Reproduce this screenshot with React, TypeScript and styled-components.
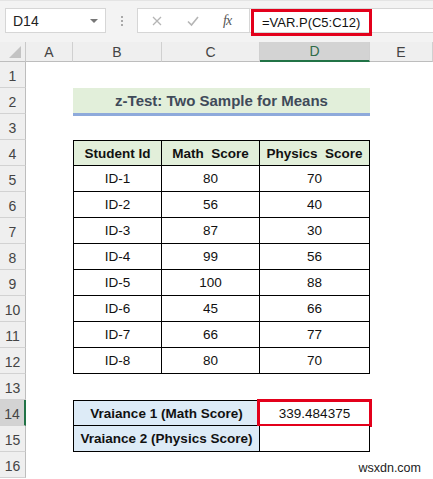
import React from 'react';
import styled, { createGlobalStyle, css } from 'styled-components';

const GlobalStyle = createGlobalStyle`
  body {
    margin: 0;
    background: #fff;
    font-family: "Liberation Sans", Arial, sans-serif;
    overflow: hidden;
  }
`;

const Window = styled.div`
  width: 433px;
  height: 479px;
  position: relative;
  overflow: hidden;
  background: #fff;
`;

// Formula bar
const Toolbar = styled.div`
  height: 42px;
  box-sizing: border-box;
  background: #f3f3f3;
  border-top: 1px solid #e4e4e4;
  display: flex;
  align-items: flex-start;
  padding: 7px 0 0 5px;
`;

const NameBox = styled.div`
  width: 101px;
  height: 25px;
  box-sizing: border-box;
  background: #fff;
  border: 1px solid #d6d6d6;
  display: flex;
  align-items: center;
  justify-content: space-between;
  padding: 0 7px 0 7px;
  font-size: 14px;
  color: #222;
`;

const DropArrow = styled.span`
  width: 0;
  height: 0;
  border-left: 4px solid transparent;
  border-right: 4px solid transparent;
  border-top: 4px solid #777;
`;

const Grip = styled.div`
  width: 31px;
  height: 25px;
  display: flex;
  flex-direction: column;
  align-items: center;
  justify-content: center;
  gap: 2px;
  span {
    width: 2px;
    height: 2px;
    background: #a9a9a9;
  }
`;

const FxBox = styled.div`
  width: 113px;
  height: 25px;
  box-sizing: border-box;
  background: #fff;
  border: 1px solid #d6d6d6;
  display: flex;
  align-items: center;
  gap: 24px;
  padding-left: 13px;
`;

const FxText = styled.span`
  width: 14px;
  font-family: "Liberation Serif", "Times New Roman", serif;
  font-style: italic;
  font-size: 14px;
  color: #555;
  letter-spacing: -1px;
`;

const FormulaArea = styled.div`
  flex: 1;
  height: 25px;
  box-sizing: border-box;
  background: #fff;
  border-top: 1px solid #d6d6d6;
  border-bottom: 1px solid #d6d6d6;
  display: flex;
`;

const RedBox = styled.div`
  width: 121px;
  height: 27px;
  box-sizing: border-box;
  margin: 0 0 0 1px;
  border: 3px solid #e3001b;
  display: flex;
  align-items: center;
  padding-left: 8px;
  font-size: 13px;
  color: #111;
`;

// Sheet
const Sheet = styled.div`
  display: grid;
  grid-template-columns: 26px 47px 89px 98px 110px 1fr;
  grid-template-rows: 20px repeat(16, 26px);
`;

const headBase = css`
  background: #efefef;
  color: #444;
  font-size: 14px;
  display: flex;
  align-items: center;
  justify-content: center;
  box-sizing: border-box;
`;

const Corner = styled.div`
  ${headBase};
  border-right: 1px solid #c9c9c9;
  border-bottom: 1px solid #bdbdbd;
  align-items: flex-end;
  justify-content: flex-end;
  padding: 0 4px 3px 0;
`;

const ColHead = styled.div<{ $active?: boolean }>`
  ${headBase};
  border-right: 1px solid #d0d0d0;
  border-bottom: 1px solid #bdbdbd;
  ${(p) =>
    p.$active &&
    css`
      background: #d3d3d3;
      color: #2f6b48;
      border-bottom: 2px solid #217346;
    `}
`;

const RowHead = styled.div<{ $active?: boolean }>`
  ${headBase};
  border-right: 1px solid #bdbdbd;
  border-bottom: 1px solid #d2d2d2;
  padding-top: 3px;
  ${(p) =>
    p.$active &&
    css`
      background: #d3d3d3;
      border-right: 2px solid #217346;
    `}
`;

const Empty = styled.div<{ $span?: number }>`
  grid-column: span ${(p) => p.$span || 1};
`;

const Title = styled.div`
  grid-column: span 3;
  height: 28px;
  box-sizing: border-box;
  background: #e2efda;
  border-bottom: 3px solid #8eaadb;
  display: flex;
  align-items: center;
  justify-content: center;
  font-weight: bold;
  font-size: 15px;
  color: #3f4a59;
`;

const Cell = styled.div<{ $span?: number; $bg?: string; $bold?: boolean; $top?: boolean; $left?: boolean }>`
  grid-column: span ${(p) => p.$span || 1};
  box-sizing: border-box;
  position: relative;
  background: ${(p) => p.$bg || '#fff'};
  border-right: 1px solid #000;
  border-bottom: 1px solid #000;
  border-top: ${(p) => (p.$top ? '1px solid #000' : 'none')};
  border-left: ${(p) => (p.$left ? '1px solid #000' : 'none')};
  display: flex;
  align-items: center;
  justify-content: center;
  font-size: 13.5px;
  font-weight: ${(p) => (p.$bold ? 'bold' : 'normal')};
  color: #111;
  white-space: pre;
`;

const Marked = styled(Cell)`
  &::after {
    content: '';
    position: absolute;
    left: -3px;
    top: -2px;
    right: -3px;
    bottom: -2px;
    border: 3px solid #e3001b;
  }
`;

const Watermark = styled.div`
  position: absolute;
  right: 12px;
  bottom: 4px;
  font-size: 12.5px;
  color: #222;
`;

const CornerMark = () => (
  <svg width="12" height="12" viewBox="0 0 12 12">
    <polygon points="12,0 12,12 0,12" fill="#c3c3c3" />
  </svg>
);

const Cross = () => (
  <svg width="12" height="12" viewBox="0 0 12 12">
    <path d="M2 2 L10 10 M10 2 L2 10" stroke="#b5b5b5" strokeWidth="1.3" fill="none" />
  </svg>
);

const Check = () => (
  <svg width="12" height="12" viewBox="0 0 12 12">
    <path d="M1 6.5 L4.5 10 L11 2" stroke="#b5b5b5" strokeWidth="1.6" fill="none" />
  </svg>
);

const scores = [
  ['ID-1', '80', '70'],
  ['ID-2', '56', '40'],
  ['ID-3', '87', '30'],
  ['ID-4', '99', '56'],
  ['ID-5', '100', '88'],
  ['ID-6', '45', '66'],
  ['ID-7', '66', '77'],
  ['ID-8', '80', '70'],
];

const greenHead = '#e2efda';
const blueHead = '#ddebf7';

const App = () => {
  return (
    <Window>
      <GlobalStyle />
      <Toolbar>
        <NameBox>
          D14
          <DropArrow />
        </NameBox>
        <Grip>
          <span />
          <span />
          <span />
        </Grip>
        <FxBox>
          <Cross />
          <Check />
          <FxText>fx</FxText>
        </FxBox>
        <FormulaArea>
          <RedBox>=VAR.P(C5:C12)</RedBox>
        </FormulaArea>
      </Toolbar>
      <Sheet>
        <Corner>
          <CornerMark />
        </Corner>
        <ColHead>A</ColHead>
        <ColHead>B</ColHead>
        <ColHead>C</ColHead>
        <ColHead $active>D</ColHead>
        <ColHead>E</ColHead>

        <RowHead>1</RowHead>
        <Empty $span={5} />

        <RowHead>2</RowHead>
        <Empty />
        <Title>z-Test: Two Sample for Means</Title>
        <Empty />

        <RowHead>3</RowHead>
        <Empty $span={5} />

        <RowHead>4</RowHead>
        <Empty />
        <Cell $bg={greenHead} $bold $top $left>Student Id</Cell>
        <Cell $bg={greenHead} $bold $top>{'Math  Score'}</Cell>
        <Cell $bg={greenHead} $bold $top>{'Physics  Score'}</Cell>
        <Empty />

        {scores.map((row, i) => (
          <React.Fragment key={row[0]}>
            <RowHead>{i + 5}</RowHead>
            <Empty />
            <Cell $left>{row[0]}</Cell>
            <Cell>{row[1]}</Cell>
            <Cell>{row[2]}</Cell>
            <Empty />
          </React.Fragment>
        ))}

        <RowHead>13</RowHead>
        <Empty $span={5} />

        <RowHead $active>14</RowHead>
        <Empty />
        <Cell $span={2} $bg={blueHead} $bold $top $left>Vraiance 1 (Math Score)</Cell>
        <Marked $top>339.484375</Marked>
        <Empty />

        <RowHead>15</RowHead>
        <Empty />
        <Cell $span={2} $bg={blueHead} $bold $left>Vraiance 2 (Physics Score)</Cell>
        <Cell />
        <Empty />

        <RowHead>16</RowHead>
        <Empty $span={5} />
      </Sheet>
      <Watermark>wsxdn.com</Watermark>
    </Window>
  );
};

export default App;
